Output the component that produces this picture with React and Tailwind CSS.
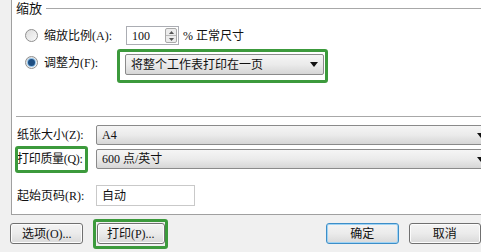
import React from 'react';

function Radio({ checked }) {
  return (
    <div className="w-[13px] h-[13px] rounded-full border border-[#8f8f8f] bg-gradient-to-br from-[#dcdcdc] to-[#fafafa] flex items-center justify-center shrink-0">
      {checked && (
        <div className="w-[7px] h-[7px] rounded-full bg-[#1f4f82] shadow-[0_0_0_1px_#8fc2ea]" />
      )}
    </div>
  );
}

function Arrow() {
  return (
    <svg width="8" height="5" viewBox="0 0 8 5" className="shrink-0">
      <path d="M0 0h8L4 5z" fill="#111" />
    </svg>
  );
}

function Select({ text, className = '' }) {
  return (
    <div
      className={`h-[20px] flex items-center justify-between pl-[5px] pr-[5px] border border-[#8a8a8a] rounded-[2px] bg-gradient-to-b from-[#f5f5f5] via-[#ebebeb] to-[#d6d6d6] ${className}`}
    >
      <span className="leading-none">{text}</span>
      <Arrow />
    </div>
  );
}

function Button({ children, primary, className = '' }) {
  return (
    <div
      className={`h-[21px] flex items-center justify-center rounded-[3px] border bg-gradient-to-b from-[#f4f4f4] via-[#ebebeb] to-[#d9d9d9] ${
        primary ? 'border-[#3d8ec8] shadow-[inset_0_0_0_1px_#9fd3f4]' : 'border-[#707070] shadow-[inset_0_0_0_1px_#fcfcfc]'
      } ${className}`}
    >
      {children}
    </div>
  );
}

export default function App() {
  return (
    <div className="w-[481px] h-[252px] overflow-hidden bg-[#f0f0f0] text-[12px] text-[#111] font-['Liberation_Serif','Noto_Sans_CJK_SC',serif]">
      <div className="ml-[11px] w-[480px] h-[215px] bg-white border-l border-b border-[#a0a0a0] flex flex-col">
        {/* 缩放 */}
        <div className="h-[16px] flex items-center pl-[4px]">
          <span className="leading-none text-[13px]">缩放</span>
          <div className="flex-1 h-px bg-[#a8a8a8] ml-[4px]" />
        </div>

        <div className="mt-[10px] h-[19px] flex items-center pl-[13px]">
          <Radio />
          <span className="ml-[6px] w-[82px] leading-none">缩放比例(A):</span>
          <div className="w-[53px] h-[19px] border border-[#abadb3] flex items-center justify-between pl-[5px] pr-[1px]">
            <span className="leading-none">100</span>
            <div className="w-[12px] h-[15px] flex flex-col border border-[#a9a9a9] rounded-[2px] bg-[#ececec]">
              <div className="flex-1 flex items-center justify-center border-b border-[#b9b9b9]">
                <svg width="5" height="3" viewBox="0 0 5 3"><path d="M0 3h5L2.5 0z" fill="#555" /></svg>
              </div>
              <div className="flex-1 flex items-center justify-center">
                <svg width="5" height="3" viewBox="0 0 5 3"><path d="M0 0h5L2.5 3z" fill="#555" /></svg>
              </div>
            </div>
          </div>
          <span className="ml-[4px] leading-none">% 正常尺寸</span>
        </div>

        <div className="mt-[4px] h-[34px] flex items-start pl-[13px]">
          <div className="mt-[3px] h-[21px] flex items-center">
            <Radio checked />
            <span className="ml-[6px] w-[73px] leading-none">调整为(F):</span>
          </div>
          <div className="w-[211px] h-[34px] border-[3px] border-[#3c9a3c] rounded-[3px] pt-[2px] pl-[5px] pr-[1px]">
            <Select text="将整个工作表打印在一页" className="h-[21px]" />
          </div>
        </div>

        <div className="mt-[33px] ml-[4px] h-px bg-[#a8a8a8]" />

        <div className="mt-[8px] grid grid-cols-[84px_1fr] gap-y-[4px] items-center">
          <span className="pl-[5px] leading-none">纸张大小(Z):</span>
          <Select text="A4" className="h-[19px]" />
          <div className="relative h-[19px] flex items-center">
            <div className="absolute left-[3px] right-[8px] top-[-4px] bottom-[-4px] border-[3px] border-[#3c9a3c] rounded-[3px]" />
            <span className="pl-[5px] leading-none tracking-[-0.3px]">打印质量(Q):</span>
          </div>
          <Select text="600 点/英寸" className="h-[19px]" />
        </div>

        <div className="mt-[16px] grid grid-cols-[84px_1fr] items-center">
          <span className="pl-[5px] leading-none">起始页码(R):</span>
          <div className="w-[99px] h-[21px] border border-[#c9c9c9] flex items-center pl-[5px]">
            <span className="leading-none">自动</span>
          </div>
        </div>
      </div>

      <div className="h-[37px] flex items-center pl-[10px]">
        <Button className="w-[76px]">选项(O)...</Button>
        <div className="ml-[10px] w-[77px] h-[30px] border-[3px] border-[#3c9a3c] rounded-[3px] flex items-center justify-center">
          <Button className="w-[68px]">打印(P)...</Button>
        </div>
        <Button primary className="ml-[158px] w-[75px]">确定</Button>
        <Button className="ml-[10px] w-[75px]">取消</Button>
      </div>
    </div>
  );
}
